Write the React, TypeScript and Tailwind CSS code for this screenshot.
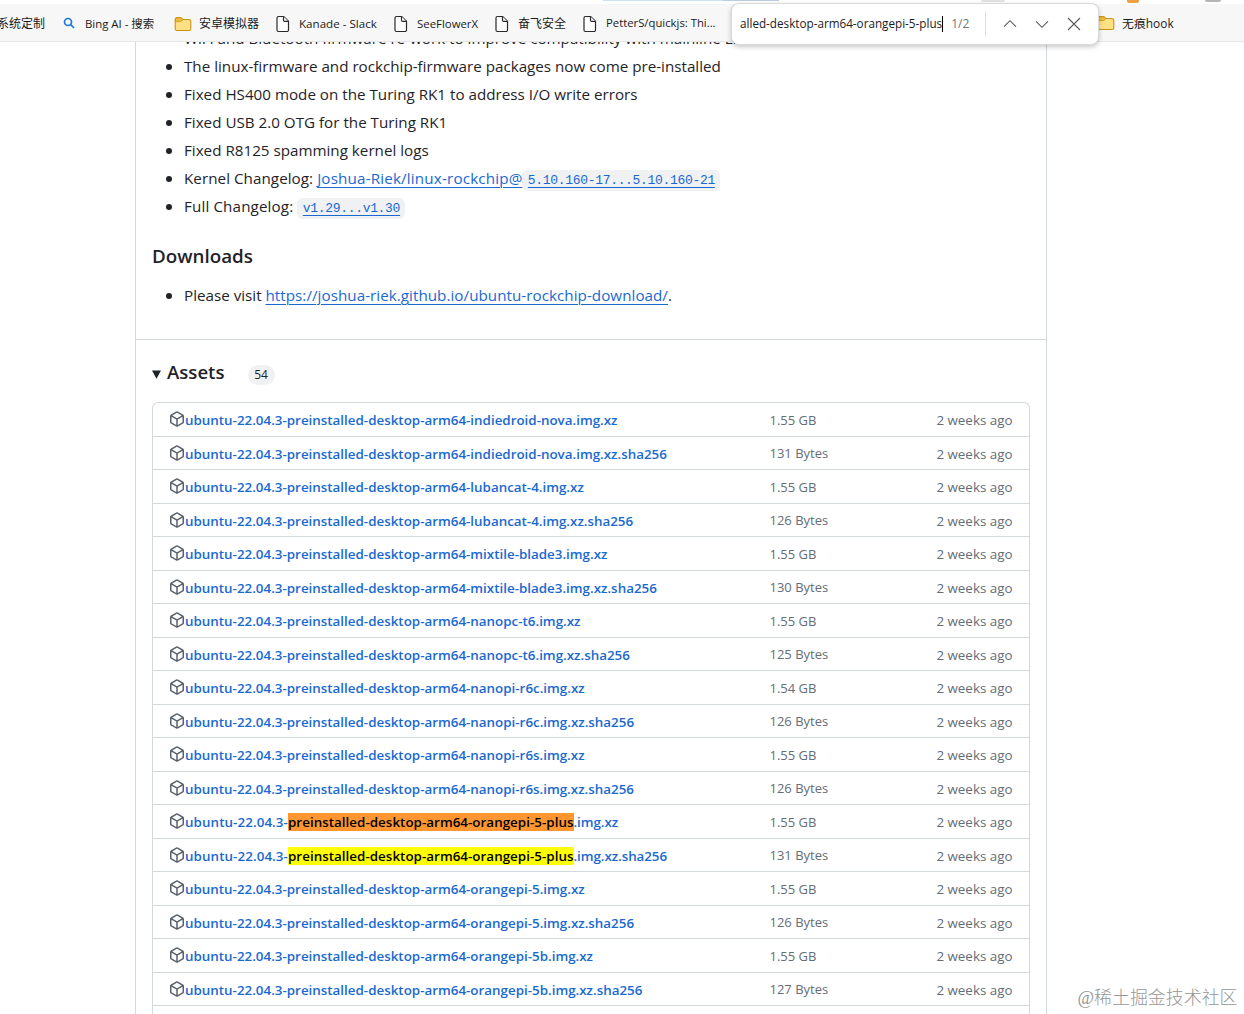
import { ReactNode } from "react";
import clsx from "clsx";

type Asset = { name: string; size: string; match?: "active" | "other" };

const QUERY = "preinstalled-desktop-arm64-orangepi-5-plus";

const assets: Asset[] = [
  { name: "preinstalled-desktop-arm64-indiedroid-nova.img.xz", size: "1.55 GB" },
  { name: "preinstalled-desktop-arm64-indiedroid-nova.img.xz.sha256", size: "131 Bytes" },
  { name: "preinstalled-desktop-arm64-lubancat-4.img.xz", size: "1.55 GB" },
  { name: "preinstalled-desktop-arm64-lubancat-4.img.xz.sha256", size: "126 Bytes" },
  { name: "preinstalled-desktop-arm64-mixtile-blade3.img.xz", size: "1.55 GB" },
  { name: "preinstalled-desktop-arm64-mixtile-blade3.img.xz.sha256", size: "130 Bytes" },
  { name: "preinstalled-desktop-arm64-nanopc-t6.img.xz", size: "1.55 GB" },
  { name: "preinstalled-desktop-arm64-nanopc-t6.img.xz.sha256", size: "125 Bytes" },
  { name: "preinstalled-desktop-arm64-nanopi-r6c.img.xz", size: "1.54 GB" },
  { name: "preinstalled-desktop-arm64-nanopi-r6c.img.xz.sha256", size: "126 Bytes" },
  { name: "preinstalled-desktop-arm64-nanopi-r6s.img.xz", size: "1.55 GB" },
  { name: "preinstalled-desktop-arm64-nanopi-r6s.img.xz.sha256", size: "126 Bytes" },
  { name: "preinstalled-desktop-arm64-orangepi-5-plus.img.xz", size: "1.55 GB", match: "active" },
  { name: "preinstalled-desktop-arm64-orangepi-5-plus.img.xz.sha256", size: "131 Bytes", match: "other" },
  { name: "preinstalled-desktop-arm64-orangepi-5.img.xz", size: "1.55 GB" },
  { name: "preinstalled-desktop-arm64-orangepi-5.img.xz.sha256", size: "126 Bytes" },
  { name: "preinstalled-desktop-arm64-orangepi-5b.img.xz", size: "1.55 GB" },
  { name: "preinstalled-desktop-arm64-orangepi-5b.img.xz.sha256", size: "127 Bytes" },
];

function PackageIcon() {
  return (
    <svg viewBox="0 0 16 16" className="mb-[2px] h-4 w-4 shrink-0 fill-[#59616a]">
      <path d="m8.878.392 5.25 3.045c.54.314.872.89.872 1.514v6.098a1.75 1.75 0 0 1-.872 1.514l-5.25 3.045a1.75 1.75 0 0 1-1.756 0l-5.25-3.045A1.75 1.75 0 0 1 1 11.049V4.951c0-.624.332-1.201.872-1.514L7.122.392a1.75 1.75 0 0 1 1.756 0ZM7.875 1.69l-4.63 2.685L8 7.133l4.755-2.758-4.63-2.685a.248.248 0 0 0-.25 0ZM2.5 5.677v5.372c0 .09.047.171.125.216l4.625 2.683V8.432Zm6.25 8.271 4.625-2.683a.25.25 0 0 0 .125-.216V5.677L8.75 8.432Z" />
    </svg>
  );
}

function PageIcon() {
  return (
    <svg viewBox="0 0 14 18" className="h-[18px] w-[14px] shrink-0 fill-white stroke-[#2a2a2a]" strokeWidth="1.2">
      <path d="M2.5 1.5h5.2l4.8 4.8v8.7a1.5 1.5 0 0 1-1.5 1.5H2.5A1.5 1.5 0 0 1 1 15V3a1.5 1.5 0 0 1 1.5-1.5Z" />
      <path d="M7.5 1.5v3.7a1.2 1.2 0 0 0 1.2 1.2h3.8" />
    </svg>
  );
}

function FolderIcon() {
  return (
    <svg viewBox="0 0 18 16" className="h-4 w-[18px] shrink-0 stroke-[#c8931a]">
      <path d="M3 1.5h3.3c.5 0 .8.1 1.1.5l1.3 1.5H15a1.8 1.8 0 0 1 1.8 1.8v7.4a1.8 1.8 0 0 1-1.8 1.8H3a1.8 1.8 0 0 1-1.8-1.8V3.3A1.8 1.8 0 0 1 3 1.5Z" fill="#ffe084" strokeWidth="1.1" />
      <path d="M1.5 5.6h5c.4 0 .7-.1 1-.4l1.4-1.6-1.6-1.8H3L1.5 3Z" fill="#f0bd3a" strokeWidth=".8" />
    </svg>
  );
}

function Bookmark({ icon, label, className }: { icon?: ReactNode; label: string; className?: string }) {
  return (
    <div className={clsx("flex shrink-0 items-center whitespace-nowrap", className)}>
      {icon}
      <span>{label}</span>
    </div>
  );
}

function BookmarksBar() {
  return (
    <header className="relative h-[42px] overflow-hidden border-b border-[#e6e6e6] bg-[#f7f7f7] text-[11.4px] text-[#1b1b1b]">
      {/* bottom edge of the toolbar above */}
      <div className="flex h-1 bg-white">
        <div className="ml-[603px] h-px w-[120px] bg-[#cfe3f5]" />
        <div className="h-px w-[56px] bg-[#bccbe6]" />
        <div className="ml-[202px] h-[2px] w-6 rounded-b-full bg-[#e2e2e2]" />
        <div className="ml-[122px] h-[3px] w-3 rounded-b-xs bg-[#f0a040]" />
        <div className="ml-[66px] h-[2px] w-4 rounded-b-full bg-[#b5b5b5]" />
      </div>
      <div className="flex h-[38px] items-center pt-px">
        <Bookmark className="-ml-[3px] w-[66px] text-[12px]" label="系统定制" />
        <Bookmark
          className="w-[111px] gap-[10px]"
          icon={
            <svg viewBox="0 0 12 12" className="h-3 w-3 fill-none stroke-[#1e78dc]" strokeWidth="1.7">
              <circle cx="5" cy="5" r="3.5" />
              <path d="m7.7 7.7 3.3 3.3" />
            </svg>
          }
          label="Bing AI - 搜索"
        />
        <Bookmark className="w-[102px] gap-[7px] text-[12px]" icon={<FolderIcon />} label="安卓模拟器" />
        <Bookmark className="w-[118px] gap-[9px] text-[11.6px]" icon={<PageIcon />} label="Kanade - Slack" />
        <Bookmark className="w-[101px] gap-[9px]" icon={<PageIcon />} label="SeeFlowerX" />
        <Bookmark className="w-[88px] gap-[9px] text-[12px]" icon={<PageIcon />} label="奋飞安全" />
        <Bookmark className="w-[514px] gap-[9px] text-[11.3px]" icon={<PageIcon />} label="PetterS/quickjs: Thi..." />
        <Bookmark className="gap-[7px] text-[11.9px]" icon={<FolderIcon />} label="无痕hook" />
      </div>
    </header>
  );
}

function FindBar() {
  return (
    <div className="absolute left-[731px] top-[3px] z-10 flex h-[42px] w-[368px] items-center rounded-lg border border-[#d9d9d9] bg-white pl-2 shadow-[0_2px_5px_rgba(0,0,0,0.22)]">
      <span className="text-[11.7px] whitespace-nowrap text-[#1b1b1b]">alled-desktop-arm64-orangepi-5-plus</span>
      <span className="h-4 w-px shrink-0 bg-black" />
      <span className="ml-[8px] w-[34px] shrink-0 text-[12px] text-[#767676]">1/2</span>
      <span className="h-6 w-px shrink-0 bg-[#dcdcdc]" />
      <svg viewBox="0 0 80 14" className="ml-4 h-[14px] w-20 shrink-0 fill-none stroke-[#5a5a5a]" strokeWidth="1.1">
        <path d="m2 9.700 6-6 6 6M34 4.300l6 6 6-6M66 1l12 12M78 1 66 13" />
      </svg>
    </div>
  );
}

function Item({ children }: { children: ReactNode }) {
  return (
    <li className="flex h-6 items-center whitespace-pre">
      <span className="mt-px mr-[12px] ml-[14px] h-[6px] w-[6px] rounded-full bg-[#1f2328]" />
      <span>{children}</span>
    </li>
  );
}

function Link({ children, className }: { children: ReactNode; className?: string }) {
  return <a className={clsx("text-[#1a69d1] underline decoration-1 underline-offset-[3px]", className)}>{children}</a>;
}

function CodeLink({ children }: { children: ReactNode }) {
  return (
    <code className="rounded-md bg-[#eff1f3] px-[5.4px] py-[3px] font-['Liberation_Mono',monospace] text-[13px] leading-none tracking-[-0.32px]">
      <Link>{children}</Link>
    </code>
  );
}

function AssetName({ asset }: { asset: Asset }) {
  if (!asset.match) return <>ubuntu-22.04.3-{asset.name}</>;
  return (
    <>
      <span className="tracking-[0.08px]">ubuntu-22.04.3-</span>
      <mark className={clsx("tracking-[0.03px] text-black", asset.match === "active" ? "bg-[#ff9632]" : "bg-[#ffff00]")}>
        {QUERY}
      </mark>
      <span className="tracking-[-0.06px]">{asset.name.slice(QUERY.length)}</span>
    </>
  );
}

export default function App() {
  return (
    <div className="relative h-[1014px] w-[1244px] overflow-hidden bg-white font-['Open_Sans','Noto_Sans_CJK_SC',sans-serif] text-[#1f2328]">
      <BookmarksBar />
      <FindBar />

      <main className="ml-[135px] h-[972px] w-[912px] overflow-hidden border-x border-[#d2d8dc]">
        <section className="flow-root h-[298px] border-b border-[#d2d8dc] px-4">
          <ul className="-mt-4 flex flex-col gap-1 text-[15.2px]">
            <Item>WiFi and Bluetooth firmware re-work to improve compatibility with mainline Li</Item>
            <Item>The linux-firmware and rockchip-firmware packages now come pre-installed</Item>
            <Item>Fixed HS400 mode on the Turing RK1 to address I/O write errors</Item>
            <Item>Fixed USB 2.0 OTG for the Turing RK1</Item>
            <Item>Fixed R8125 spamming kernel logs</Item>
            <Item>
              <span className="tracking-[0.05px]">Kernel Changelog: </span>
              <Link className="tracking-[0.17px]">Joshua-Riek/linux-rockchip@</Link>
              <CodeLink>5.10.160-17...5.10.160-21</CodeLink>
            </Item>
            <Item>
              <span className="tracking-[0.13px]">Full Changelog: </span>
              <CodeLink>v1.29...v1.30</CodeLink>
            </Item>
          </ul>
          <h3 className="mt-[26px] text-[18.8px] leading-[25px] font-semibold">Downloads</h3>
          <ul className="mt-[14px] text-[15.2px]">
            <Item>
              Please visit <Link className="tracking-[0.04px]">https://joshua-riek.github.io/ubuntu-rockchip-download/</Link>.
            </Item>
          </ul>
        </section>

        <section className="px-4 pt-[17px]">
          <div className="flex h-[30px] items-center">
            <svg viewBox="0 0 10 9" className="mt-[5px] h-[9px] w-[10px] fill-[#1f2328]">
              <path d="M0 .5h9L4.5 8.8Z" />
            </svg>
            <h3 className="ml-[5px] text-[18.6px] font-semibold">Assets</h3>
            <span className="mt-[5px] ml-[23px] flex h-5 w-[27px] items-center justify-center rounded-full bg-[#eff1f3] text-[12px] font-medium">
              54
            </span>
          </div>

          <ul className="mt-[15px] w-[878px] rounded-t-md border border-b-0 border-[#d2d8dc] text-[13.38px]">
            {assets.map((asset, i) => (
              <li
                key={asset.name}
                className={clsx(
                  "flex items-center px-4 pt-px",
                  i === 0 ? "h-[32.9px]" : "h-[33.5px] border-t border-[#d2d8dc]",
                )}
              >
                <PackageIcon />
                <span className="w-[584.5px] font-semibold whitespace-nowrap text-[#1a69d1]">
                  <AssetName asset={asset} />
                </span>
                <span className="pt-px text-[13px] text-[#656d76]">{asset.size}</span>
                <span className="mr-[0.5px] ml-auto text-[#656d76]">2 weeks ago</span>
              </li>
            ))}
            <li className="h-[33.5px] border-t border-[#d2d8dc]" />
          </ul>
        </section>
      </main>

      <div className="absolute top-[984px] left-[1077.5px] font-['Liberation_Serif','Noto_Sans_CJK_SC',serif] text-[17.95px] leading-7 font-light whitespace-nowrap text-[#969696]">
        @稀土掘金技术社区
      </div>
    </div>
  );
}
